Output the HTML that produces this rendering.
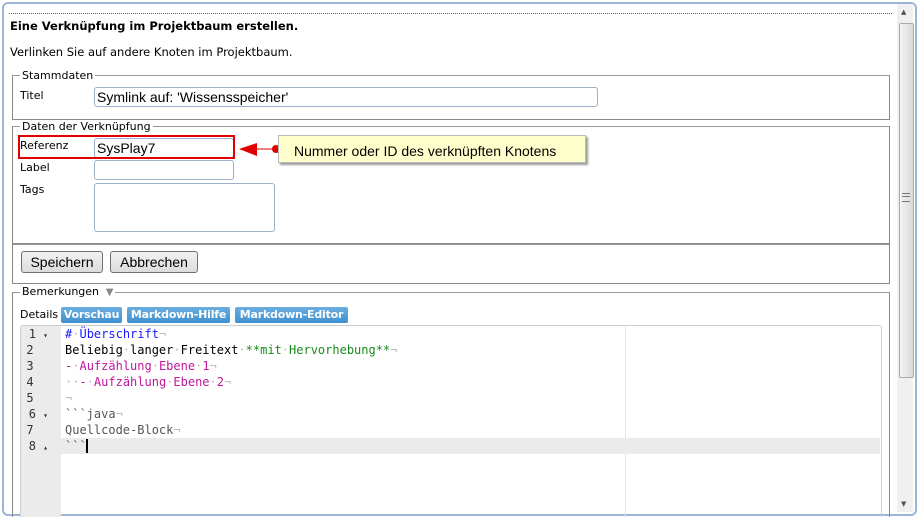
<!DOCTYPE html><html><head><meta charset="utf-8"><style>
html,body{margin:0;width:919px;height:517px;overflow:hidden}
body{background:#fff;font-family:"DejaVu Sans",Verdana,sans-serif;font-size:11px;color:#000}
#w{position:relative;width:919px;height:517px;overflow:hidden}
.a{position:absolute}
.fs{position:absolute;border:1px solid #888;border-top-color:#999}
.lg{position:absolute;background:#fff;padding:0 2px;font-size:11px}
.inp{position:absolute;border:1px solid #9db0cc;border-radius:3px;background:#fff;font-family:"Liberation Sans",Arial,sans-serif;font-size:14px;padding-left:2px;box-sizing:border-box;line-height:18px}
.btn{position:absolute;border:1px solid #707070;border-radius:3px;background:linear-gradient(#f2f2f2,#dcdcdc);font-family:"Liberation Sans",Arial,sans-serif;font-size:14px;text-align:center;line-height:20px;box-sizing:border-box}
.tab{position:absolute;top:307px;height:16px;background:linear-gradient(#6aaee0,#3f8fd0);color:#fff;font-weight:bold;font-size:11px;line-height:16px;border-radius:2px;white-space:nowrap;text-align:center;overflow:hidden;letter-spacing:-0.2px}
.ln{position:absolute;left:20px;width:28px;text-align:right;font-family:"DejaVu Sans Mono",monospace;font-size:12px;color:#333}
.cd{position:absolute;left:65px;font-family:"DejaVu Sans Mono",monospace;font-size:12px;white-space:pre}
.i{color:#bbb}
</style></head><body><div id="w">
<div class="a" style="left:2px;top:2px;width:911px;height:510px;border:2px solid #9ab5d8;border-radius:6px"></div>
<div class="a" style="left:9px;top:13px;width:883px;border-top:1px dotted #2a7a2a"></div>
<div class="a" style="left:10px;top:19px;font-weight:bold;font-size:11.5px">Eine Verknüpfung im Projektbaum erstellen.</div>
<div class="a" style="left:10px;top:45px;font-size:11.5px">Verlinken Sie auf andere Knoten im Projektbaum.</div>

<div class="fs" style="left:12px;top:75px;width:876px;height:43px"></div>
<div class="lg" style="left:20px;top:69px">Stammdaten</div>
<div class="a" style="left:20px;top:89px">Titel</div>
<div class="inp" style="left:94px;top:87px;width:504px;height:20px">Symlink auf: 'Wissensspeicher'</div>

<div class="fs" style="left:12px;top:126px;width:876px;height:116px"></div>
<div class="lg" style="left:20px;top:120px">Daten der Verknüpfung</div>
<div class="a" style="left:20px;top:139px">Referenz</div>
<div class="inp" style="left:94px;top:138px;width:140px;height:20px">SysPlay7</div>
<div class="a" style="left:18px;top:135px;width:217px;height:24px;border:2px solid #e00000;box-sizing:border-box"></div>
<div class="a" style="left:20px;top:161px">Label</div>
<div class="inp" style="left:94px;top:160px;width:140px;height:20px"></div>
<div class="a" style="left:20px;top:183px">Tags</div>
<div class="inp" style="left:94px;top:183px;width:181px;height:49px"></div>
<svg class="a" style="left:237px;top:140px" width="46" height="20"><polygon points="2,9 20,3 20,16" fill="#e00000"/><line x1="20" y1="9" x2="38" y2="9" stroke="#e00000" stroke-width="1"/><circle cx="39" cy="9" r="4" fill="#e00000"/></svg>
<div class="a" style="left:278px;top:135px;width:308px;height:28px;background:#ffffcc;border:1px solid #bbb;box-shadow:2px 2px 2px #999;font-family:'Liberation Sans',Arial,sans-serif;font-size:14px;line-height:30px;padding-left:15px;box-sizing:border-box">Nummer oder ID des verknüpften Knotens</div>

<div class="fs" style="left:12px;top:244px;width:876px;height:38px"></div>
<div class="btn" style="left:21px;top:251px;width:82px;height:22px">Speichern</div>
<div class="btn" style="left:110px;top:251px;width:88px;height:22px">Abbrechen</div>

<div class="fs" style="left:12px;top:292px;width:876px;height:240px"></div>
<div class="lg" style="left:20px;top:285px">Bemerkungen <span style="color:#888;font-size:10px">&nbsp;▼</span></div>
<div class="a" style="left:20px;top:308px">Details</div>
<div class="tab" style="left:61px;width:61px">Vorschau</div>
<div class="tab" style="left:127px;width:103px">Markdown-Hilfe</div>
<div class="tab" style="left:235px;width:113px">Markdown-Editor</div>

<div class="a" style="left:20px;top:325px;width:860px;height:200px;border:1px solid #ccc;border-radius:3px"></div>
<div class="a" style="left:21px;top:326px;width:40px;height:200px;background:#ebebeb"></div>
<div class="a" style="left:625px;top:326px;width:1px;height:200px;background:#e4e4e4"></div>
<div class="a" style="left:21px;top:438px;width:859px;height:16px;background:#ebebeb"></div>
<div class="a" style="left:86px;top:439px;width:2px;height:14px;background:#000"></div>

<div class="ln" style="top:327px">1 <span style="font-size:8px">▾</span></div>
<div class="ln" style="top:343px">2&nbsp;&nbsp;</div>
<div class="ln" style="top:359px">3&nbsp;&nbsp;</div>
<div class="ln" style="top:375px">4&nbsp;&nbsp;</div>
<div class="ln" style="top:391px">5&nbsp;&nbsp;</div>
<div class="ln" style="top:407px">6 <span style="font-size:8px">▾</span></div>
<div class="ln" style="top:423px">7&nbsp;&nbsp;</div>
<div class="ln" style="top:439px">8 <span style="font-size:8px">▴</span></div>

<div class="cd" style="top:327px;color:#1a1aff">#<span class="i">·</span>Überschrift<span class="i">¬</span></div>
<div class="cd" style="top:343px">Beliebig<span class="i">·</span>langer<span class="i">·</span>Freitext<span class="i">·</span><span style="color:#1a8a1a">**mit<span class="i">·</span>Hervorhebung**</span><span class="i">¬</span></div>
<div class="cd" style="top:359px;color:#c0179a">-<span class="i">·</span>Aufzählung<span class="i">·</span>Ebene<span class="i">·</span>1<span class="i">¬</span></div>
<div class="cd" style="top:375px;color:#c0179a"><span class="i">··</span>-<span class="i">·</span>Aufzählung<span class="i">·</span>Ebene<span class="i">·</span>2<span class="i">¬</span></div>
<div class="cd" style="top:391px"><span class="i">¬</span></div>
<div class="cd" style="top:407px;color:#555">&#96;&#96;&#96;java<span class="i">¬</span></div>
<div class="cd" style="top:423px;color:#555">Quellcode-Block<span class="i">¬</span></div>
<div class="cd" style="top:439px;color:#555">&#96;&#96;&#96;</div>

<div class="a" style="left:897px;top:4px;width:16px;height:508px;background:#f0f0f0"></div>
<div class="a" style="left:899px;top:23px;width:13px;height:353px;border:1px solid #aaa;border-radius:2px;background:linear-gradient(90deg,#f4f4f4,#d8d8d8)"></div>
<div class="a" style="left:902px;top:193px;width:8px;height:7px;border-top:1px solid #777;border-bottom:1px solid #777"></div>
<div class="a" style="left:902px;top:196px;width:8px;border-top:1px solid #777"></div>
<div class="a" style="left:901px;top:8px;font-size:7px;color:#555">▲</div>
<div class="a" style="left:901px;top:500px;font-size:7px;color:#555">▼</div>
</div></body></html>
